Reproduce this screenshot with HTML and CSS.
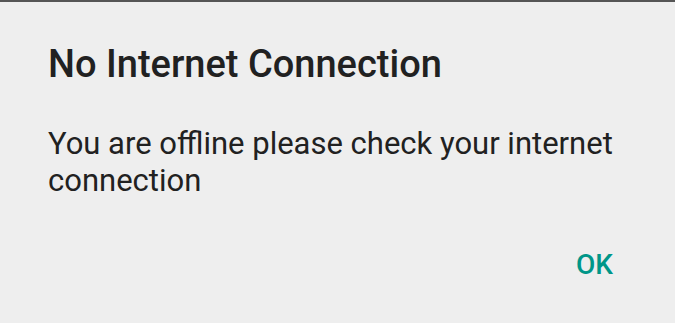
FILE: index.html
```html
<!DOCTYPE html>
<html>
<head>
<meta charset="utf-8">
<link rel="stylesheet" href="styles.css">
</head>
<body>
<div class="backdrop"></div>
<div class="dialog">
  <h1 class="title">No Internet Connection</h1>
  <p class="message">You are offline please check your internet connection</p>
  <div class="actions">
    <button class="btn">OK</button>
  </div>
</div>
</body>
</html>
```
FILE: styles.css
```css
html, body {
  margin: 0;
  padding: 0;
  width: 675px;
  height: 323px;
  overflow: hidden;
  background: #eeeeee;
  font-family: Roboto, "Liberation Sans", sans-serif;
}
.backdrop {
  height: 2px;
  background: #555555;
}
.dialog {
  background: #eeeeee;
  border-radius: 2px 2px 0 0;
  height: 321px;
  box-sizing: border-box;
  padding: 40px 0 0 48px;
  display: flex;
  flex-direction: column;
}
.title {
  margin: 0;
  font-size: 38px;
  font-weight: 500;
  line-height: 44px;
  color: #212121;
}
.message {
  margin: 39px 0 0 0;
  font-size: 31px;
  font-weight: 400;
  line-height: 37px;
  color: #212121;
  width: 590px;
}
.actions {
  display: flex;
  justify-content: flex-end;
  margin-top: 42px;
  padding-right: 54px;
}
.btn {
  font-family: Roboto, "Liberation Sans", sans-serif;
  font-size: 28px;
  font-weight: 500;
  color: #009688;
  background: transparent;
  border: none;
  padding: 8px 8px;
  line-height: 32px;
}
```
